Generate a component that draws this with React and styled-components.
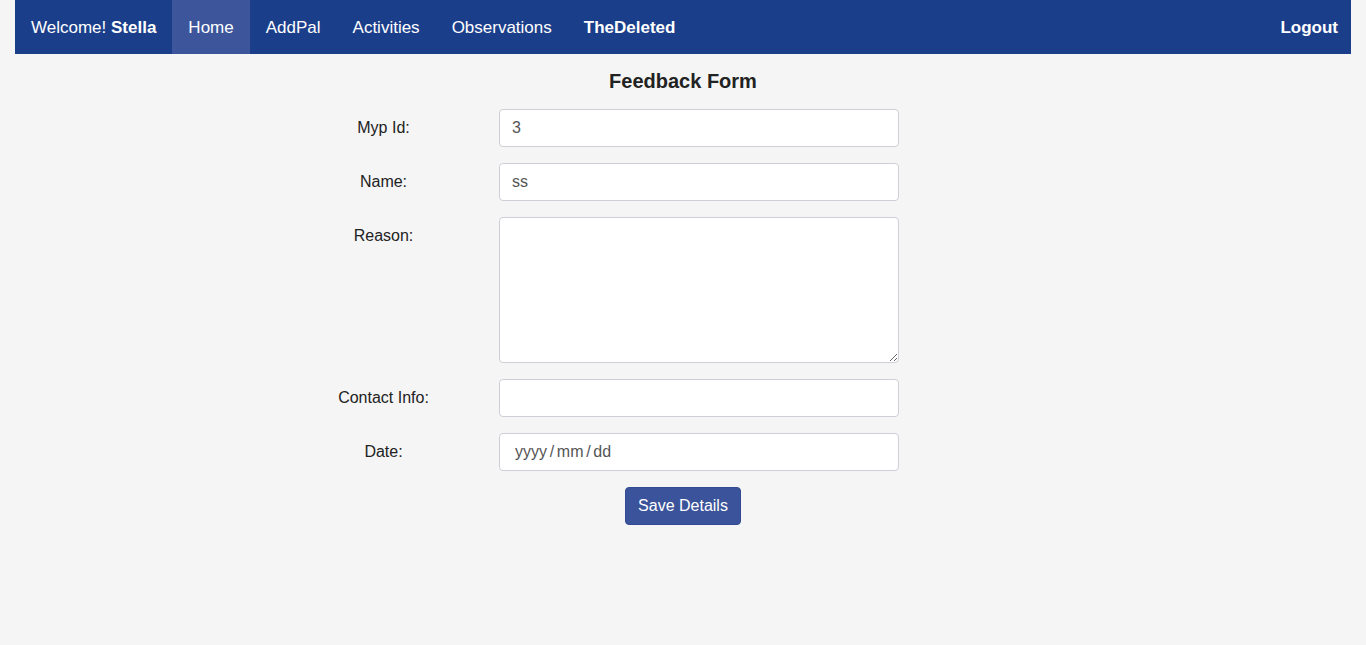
import React from 'react';
import styled, { createGlobalStyle } from 'styled-components';

const GlobalStyle = createGlobalStyle`
  body {
    margin: 0;
    background: #f5f5f5;
    font-family: "Liberation Sans", Arial, sans-serif;
    color: #222;
  }
`;

const Page = styled.div`
  padding: 0 15px;
`;

const NavBar = styled.nav`
  display: flex;
  align-items: stretch;
  height: 54px;
  background-color: #1b3e8a;
`;

const NavItem = styled.a`
  display: flex;
  align-items: center;
  padding: 1px 16px 0;
  color: #fff;
  font-size: 17px;
  text-decoration: none;
  font-weight: ${props => (props.bold ? 'bold' : 'normal')};
  background-color: ${props => (props.active ? '#3d559b' : 'transparent')};
  margin-left: ${props => (props.right ? 'auto' : '0')};
  padding-right: ${props => (props.right ? '13px' : '16px')};
`;

const Title = styled.h2`
  margin: 16px 0 16px;
  text-align: center;
  font-size: 20px;
  line-height: 23px;
  font-weight: bold;
  color: #222;
`;

const Form = styled.form`
  width: 800px;
  margin: 0 auto;
  display: flex;
  flex-direction: column;
  gap: 16px;
`;

const Row = styled.div`
  display: grid;
  grid-template-columns: 201px 400px;
  column-gap: 15px;
  align-items: ${props => (props.top ? 'start' : 'center')};
`;

const Label = styled.label`
  text-align: center;
  font-size: 16px;
  color: #222;
  padding-top: ${props => (props.top ? '10px' : '0')};
`;

const Input = styled.input`
  box-sizing: border-box;
  width: 400px;
  height: 38px;
  padding: 0 ${props => (props.date ? '15px' : '12px')};
  border: 1px solid #ccd0d6;
  border-radius: 4px;
  background: #fff;
  font-family: "Liberation Sans", Arial, sans-serif;
  font-size: 16px;
  color: #555;
  outline: none;

  &::placeholder {
    color: #555;
    opacity: 1;
    word-spacing: -1.75px;
  }
`;

const TextArea = styled.textarea`
  box-sizing: border-box;
  width: 400px;
  height: 146px;
  padding: 8px 12px;
  border: 1px solid #ccd0d6;
  border-radius: 4px;
  background: #fff;
  font-family: "Liberation Sans", Arial, sans-serif;
  font-size: 16px;
  color: #555;
  display: block;
`;

const Actions = styled.div`
  display: flex;
  justify-content: center;
`;

const SaveButton = styled.button`
  height: 38px;
  padding: 0 12px;
  background-color: #3b539a;
  color: #fff;
  border: 1px solid #304a93;
  border-radius: 4px;
  font-family: "Liberation Sans", Arial, sans-serif;
  font-size: 16px;
  cursor: pointer;
`;

function App() {
  return (
    <Page>
      <GlobalStyle />
      <NavBar>
        <NavItem>Welcome!&nbsp;<b>Stella</b></NavItem>
        <NavItem active>Home</NavItem>
        <NavItem>AddPal</NavItem>
        <NavItem>Activities</NavItem>
        <NavItem>Observations</NavItem>
        <NavItem bold>TheDeleted</NavItem>
        <NavItem bold right>Logout</NavItem>
      </NavBar>

      <Title>Feedback Form</Title>

      <Form onSubmit={e => e.preventDefault()}>
        <Row>
          <Label>Myp Id:</Label>
          <Input defaultValue="3" />
        </Row>
        <Row>
          <Label>Name:</Label>
          <Input defaultValue="ss" />
        </Row>
        <Row top>
          <Label top>Reason:</Label>
          <TextArea />
        </Row>
        <Row>
          <Label>Contact Info:</Label>
          <Input />
        </Row>
        <Row>
          <Label>Date:</Label>
          <Input date placeholder="yyyy / mm / dd" />
        </Row>
        <Actions>
          <SaveButton type="submit">Save Details</SaveButton>
        </Actions>
      </Form>
    </Page>
  );
}

export default App;
